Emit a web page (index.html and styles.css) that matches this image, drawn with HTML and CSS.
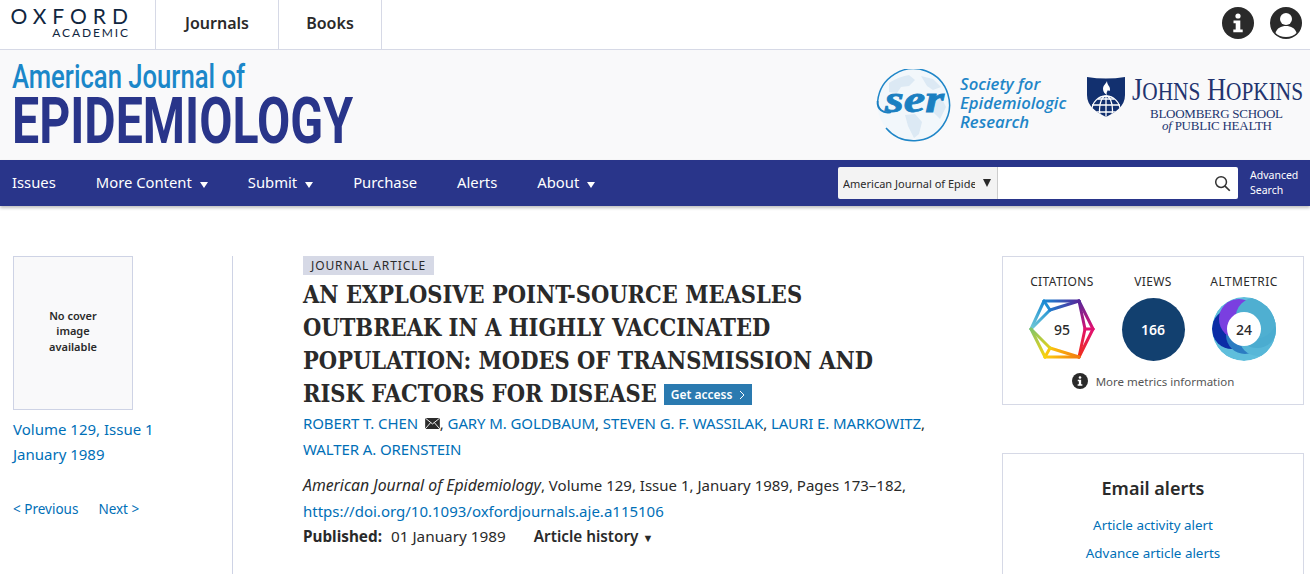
FILE: index.html
```html
<!DOCTYPE html>
<html lang="en">
<head>
    <meta charset="UTF-8">
    <title>An Explosive Point-Source Measles Outbreak | American Journal of Epidemiology</title>
    <link rel="stylesheet" href="styles.css">
</head>
<body>
    <div class="top-bar">
        <a class="oxford-logo">
            <span class="oxford-word">OXFORD</span>
            <span class="oxford-sub">ACADEMIC</span>
        </a>
        <a class="top-link top-link-first">Journals</a>
        <a class="top-link top-link-second">Books</a>
        <div class="top-icons">
            <svg class="top-icon" viewBox="0 0 32 32">
                <circle cx="16" cy="16" r="16" fill="#2a2a2a"/>
                <circle cx="16" cy="9" r="2.600" fill="#fff"/>
                <path d="M11.500 13.500h6.800v9h2.400v2.800h-9.400v-2.800h2.400v-6.200h-2.200z" fill="#fff"/>
            </svg>
            <svg class="top-icon" viewBox="0 0 32 32">
                <circle cx="16" cy="16" r="16" fill="#2a2a2a"/>
                <circle cx="16" cy="12" r="6" fill="#fff"/>
                <path d="M5.500 26c1.500-5 5.500-7 10.500-7s9 2 10.500 7c-2.500 2.500-6 4-10.500 4s-8-1.500-10.500-4z" fill="#fff"/>
            </svg>
        </div>
    </div>

    <div class="journal-header">
        <svg class="journal-title" viewBox="0 0 345 96" role="img">
            <text class="journal-line1" x="0" y="38" textLength="233" lengthAdjust="spacingAndGlyphs">American Journal of</text>
            <text class="journal-line2" x="0" y="93" textLength="341" lengthAdjust="spacingAndGlyphs">EPIDEMIOLOGY</text>
        </svg>
        <div class="partner-logos">
            <svg class="ser-logo" viewBox="0 0 200 76">
                <circle cx="38.500" cy="35.500" r="36" fill="#f2f7fb"/>
                <path d="M14 14c8-5 14-7 20-8l6 5-6 6-8 1-4 6-8-1zM46 7l12 3 8 8-8 3-6-4zM30 46l10-1 7 8-3 12-5 4-6-12zM54 30l12-2 5 10-6 12-8-8z" fill="#dce9f4"/>
                <path d="M11 59A36 36 0 1 0 2.700 32" fill="none" stroke="#1f86c8" stroke-width="1.500"/>
                <path d="M2.700 32C2 40 8 45 16 43" fill="none" stroke="#1a7fc1" stroke-width="2"/>
                <text class="ser-mark" x="10" y="43" textLength="59" lengthAdjust="spacingAndGlyphs">ser</text>
                <text class="ser-text" x="85" y="21">Society for</text>
                <text class="ser-text" x="85" y="40">Epidemiologic</text>
                <text class="ser-text" x="85" y="59">Research</text>
            </svg>
            <svg class="jhu-logo" viewBox="0 0 216 62">
                <defs>
                    <clipPath id="jhu-shield">
                        <path d="M0 2Q19 5 38 2V20C38 31 29 37 19 42 9 37 0 31 0 20z"/>
                    </clipPath>
                </defs>
                <path d="M0 2Q19 5 38 2V20C38 31 29 37 19 42 9 37 0 31 0 20z" fill="#12306f"/>
                <path d="M20 6c-1 3-4 4-4 8 0 3 2 5 4 6-1-2 0-3 1-5 1 2 2 1 2-1 0-3-3-4-3-8z" fill="#fff"/>
                <g clip-path="url(#jhu-shield)" fill="none" stroke="#fff" stroke-width="1.300">
                    <circle cx="19" cy="35" r="14"/>
                    <ellipse cx="19" cy="35" rx="6.500" ry="14"/>
                    <path d="M19 21v21M5 30h28M7 37h24M11 24h16"/>
                </g>
                <text class="jhu-name" x="45" y="25" textLength="171" lengthAdjust="spacingAndGlyphs">J<tspan class="jhu-small">OHNS</tspan> H<tspan class="jhu-small">OPKINS</tspan></text>
                <text class="jhu-sub" x="63" y="43" textLength="133" lengthAdjust="spacing">BLOOMBERG SCHOOL</text>
                <text class="jhu-sub" x="75" y="55" textLength="110" lengthAdjust="spacing"><tspan font-style="italic">of</tspan> PUBLIC HEALTH</text>
            </svg>
        </div>
    </div>

    <div class="site-nav">
        <a class="nav-item">Issues</a>
        <a class="nav-item has-menu">More Content</a>
        <a class="nav-item has-menu">Submit</a>
        <a class="nav-item">Purchase</a>
        <a class="nav-item">Alerts</a>
        <a class="nav-item has-menu">About</a>
        <div class="nav-search">
            <div class="search-scope">
                <span class="search-scope-text">American Journal of Epidemiology</span>
                <span class="search-scope-arrow"></span>
            </div>
            <div class="search-box">
                <svg class="search-icon" viewBox="0 0 18 18">
                    <circle cx="7.500" cy="7.500" r="5.700" fill="none" stroke="#333" stroke-width="1.600"/>
                    <path d="M11.700 11.700l5 5" stroke="#333" stroke-width="1.800"/>
                </svg>
            </div>
            <a class="advanced-search">Advanced<br>Search</a>
        </div>
    </div>

    <div class="page-body">
        <div class="issue-col">
            <div class="cover">No cover<br>image<br>available</div>
            <a class="issue-link">Volume 129, Issue 1</a>
            <a class="issue-link">January 1989</a>
            <div class="issue-pager">
                <a>&lt; Previous</a>
                <a>Next &gt;</a>
            </div>
        </div>

        <div class="article-col">
            <span class="article-type">JOURNAL ARTICLE</span>
            <h1 class="article-title">AN EXPLOSIVE POINT-SOURCE MEASLES<br>OUTBREAK IN A HIGHLY VACCINATED<br>POPULATION: MODES OF TRANSMISSION AND<br>RISK FACTORS FOR DISEASE<a class="get-access">Get access<svg class="access-chevron" viewBox="0 0 6 10"><path d="M1 1l4 4-4 4" fill="none" stroke="#fff" stroke-width="1"/></svg></a></h1>
            <div class="authors">
                <a>ROBERT T. CHEN</a>
                <svg class="mail-icon" viewBox="0 0 16 12">
                    <path d="M0 0h16v12H0z" fill="#2a2a2a"/>
                    <path d="M0 0l8 6.500L16 0M0 12l6-7M16 12l-6-7" fill="none" stroke="#fff" stroke-width="1"/>
                </svg>, <a>GARY M. GOLDBAUM</a>, <a>STEVEN G. F. WASSILAK</a>, <a>LAURI E. MARKOWITZ</a>,<br>
                <a>WALTER A. ORENSTEIN</a>
            </div>
            <div class="citation">
                <em>American Journal of Epidemiology</em>, Volume 129, Issue 1, January 1989, Pages 173–182,<br>
                <a>https://doi.org/10.1093/oxfordjournals.aje.a115106</a>
            </div>
            <div class="pub-meta">
                <b>Published:</b><span class="pub-date">01 January 1989</span>
                <b class="history">Article history <i class="history-arrow">▼</i></b>
            </div>
        </div>

        <div class="side-col">
            <div class="metrics-card">
                <div class="metrics-row">
                    <div class="metric">
                        <div class="metric-label">CITATIONS</div>
                        <div class="metric-badge">
                            <svg viewBox="0 0 66 60" fill="none" stroke-width="3" stroke-linecap="round" stroke-linejoin="round">
                                <defs>
                                    <linearGradient id="hex-a" gradientUnits="userSpaceOnUse" x1="1" y1="30" x2="15" y2="2"><stop offset="0" stop-color="#74cbd6"/><stop offset="1" stop-color="#1789d4"/></linearGradient>
                                    <linearGradient id="hex-b" gradientUnits="userSpaceOnUse" x1="15" y1="2" x2="50" y2="2"><stop offset="0" stop-color="#1789d4"/><stop offset="1" stop-color="#55289a"/></linearGradient>
                                    <linearGradient id="hex-c" gradientUnits="userSpaceOnUse" x1="50" y1="2" x2="62" y2="30"><stop offset="0" stop-color="#55289a"/><stop offset="1" stop-color="#e01070"/></linearGradient>
                                    <linearGradient id="hex-d" gradientUnits="userSpaceOnUse" x1="62" y1="30" x2="50" y2="58"><stop offset="0" stop-color="#e01070"/><stop offset="1" stop-color="#f0301a"/></linearGradient>
                                    <linearGradient id="hex-e" gradientUnits="userSpaceOnUse" x1="50" y1="58" x2="16" y2="58"><stop offset="0" stop-color="#f27a10"/><stop offset="1" stop-color="#fdd00c"/></linearGradient>
                                    <linearGradient id="hex-f" gradientUnits="userSpaceOnUse" x1="16" y1="58" x2="1" y2="30"><stop offset="0" stop-color="#f8d40c"/><stop offset="1" stop-color="#7fc46a"/></linearGradient>
                                </defs>
                                <path d="M2 30L15 2" stroke="url(#hex-a)"/>
                                <path d="M2 30L21 11" stroke="url(#hex-a)"/>
                                <path d="M15 2L21 11" stroke="#1e8fd5"/>
                                <path d="M15 2H50" stroke="url(#hex-b)"/>
                                <path d="M21 11L50 2" stroke="url(#hex-b)"/>
                                <path d="M50 2L64 30" stroke="url(#hex-c)"/>
                                <path d="M50 2L56 30" stroke="url(#hex-c)"/>
                                <path d="M56 30H64" stroke="#e01070"/>
                                <path d="M64 30L50 58" stroke="url(#hex-d)"/>
                                <path d="M56 30L50 58" stroke="url(#hex-d)"/>
                                <path d="M50 58H16" stroke="url(#hex-e)"/>
                                <path d="M50 58L21 49" stroke="url(#hex-e)"/>
                                <path d="M16 58L21 49" stroke="#fbc60c"/>
                                <path d="M16 58L2 30" stroke="url(#hex-f)"/>
                                <path d="M21 49L2 30" stroke="url(#hex-f)"/>
                            </svg>
                            <span class="badge-num">95</span>
                        </div>
                    </div>
                    <div class="metric">
                        <div class="metric-label">VIEWS</div>
                        <div class="metric-badge">
                            <div class="views-circle">166</div>
                        </div>
                    </div>
                    <div class="metric">
                        <div class="metric-label">ALTMETRIC</div>
                        <div class="metric-badge">
                            <svg viewBox="0 0 64 64">
                                <defs>
                                    <clipPath id="alt-clip"><circle cx="32" cy="32" r="32"/></clipPath>
                                </defs>
                                <g clip-path="url(#alt-clip)">
                                    <circle cx="32" cy="32" r="32" fill="#5fbedc"/>
                                    <circle cx="20" cy="32" r="20" fill="#0b2ca6"/>
                                    <circle cx="33" cy="38" r="19" fill="#2b7cc2"/>
                                    <circle cx="27" cy="22" r="20" fill="#7a3fe0"/>
                                    <circle cx="46" cy="40" r="19" fill="#57b7d8"/>
                                    <circle cx="45" cy="31" r="20" fill="#4bacd0"/>
                                    <circle cx="44" cy="21" r="20.500" fill="#4fafd1"/>
                                </g>
                                <circle cx="32" cy="32" r="17" fill="#fff"/>
                            </svg>
                            <span class="badge-num">24</span>
                        </div>
                    </div>
                </div>
                <div class="metrics-info">
                    <svg class="metrics-info-icon" viewBox="0 0 32 32">
                        <circle cx="16" cy="16" r="16" fill="#2a2a2a"/>
                        <circle cx="16" cy="9" r="2.600" fill="#fff"/>
                        <path d="M11.500 13.500h6.800v9h2.400v2.800h-9.400v-2.800h2.400v-6.200h-2.200z" fill="#fff"/>
                    </svg>
                    More metrics information
                </div>
            </div>
            <div class="alerts-card">
                <h3>Email alerts</h3>
                <a>Article activity alert</a>
                <a>Advance article alerts</a>
            </div>
        </div>
    </div>
</body>
</html>
```

FILE: styles.css
```css
html, body {
    height: 574px;
    overflow: hidden;
}
body {
    margin: 0;
    font-family: "Noto Sans", Arial, sans-serif;
    color: #2a2a2a;
    background: #fff;
}
a {
    color: #006fb7;
    text-decoration: none;
}

/* top bar */
.top-bar {
    display: flex;
    align-items: stretch;
    height: 49px;
    border-bottom: 1px solid #d6d9e6;
}
.oxford-logo {
    display: flex;
    flex-direction: column;
    align-items: flex-end;
    flex: none;
    width: 116px;
    padding: 6px 27px 0 12px;
    color: #10263f;
}
.oxford-word {
    font-family: "Lato", sans-serif;
    font-size: 21px;
    line-height: 20px;
    letter-spacing: 6px;
    margin-right: -6px;
}
.oxford-sub {
    font-family: "Lato", sans-serif;
    font-size: 12px;
    line-height: 14px;
    letter-spacing: 1.900px;
    margin-right: -2px;
}
.top-link {
    display: flex;
    align-items: center;
    justify-content: center;
    padding-bottom: 4px;
    font-size: 16px;
    font-weight: 600;
    color: #2a2a2a;
    border-right: 1px solid #d6d9e6;
}
.top-link-first {
    width: 122px;
    border-left: 1px solid #d6d9e6;
}
.top-link-second {
    width: 102px;
}
.top-icons {
    display: flex;
    align-items: center;
    gap: 16px;
    margin-left: auto;
    padding: 0 8px 3px 0;
}
.top-icon {
    width: 32px;
    height: 32px;
}

/* journal header */
.journal-header {
    display: flex;
    justify-content: space-between;
    height: 110px;
    padding: 0 7px 0 12px;
    background: #f9f9fa;
}
.journal-title {
    width: 345px;
    height: 96px;
    overflow: visible;
}
.journal-line1 {
    font-family: "Roboto", sans-serif;
    font-weight: 500;
    font-size: 33px;
    fill: #1b87c9;
}
.journal-line2 {
    font-family: "Roboto", sans-serif;
    font-weight: 700;
    font-size: 65px;
    fill: #29358a;
}
.partner-logos {
    display: flex;
    gap: 12px;
    padding-top: 19px;
}
.ser-logo {
    width: 200px;
    height: 76px;
}
.ser-mark {
    font-family: "Liberation Serif", serif;
    font-style: italic;
    font-weight: 700;
    font-size: 37px;
    fill: #1a7fc1;
    stroke: #1a7fc1;
    stroke-width: 0.800;
}
.ser-text {
    font-family: "Open Sans", sans-serif;
    font-style: italic;
    font-weight: 600;
    font-size: 16.700px;
    fill: #1f86c8;
}
.jhu-logo {
    width: 216px;
    height: 62px;
    margin-top: 6px;
    overflow: visible;
}
.jhu-name {
    font-family: "Liberation Serif", serif;
    font-size: 31px;
    fill: #22346f;
}
.jhu-small {
    font-size: 25px;
}
.jhu-sub {
    font-family: "Liberation Serif", serif;
    font-size: 13px;
    fill: #22346f;
}

/* nav */
.site-nav {
    display: flex;
    align-items: center;
    height: 46px;
    padding: 0 0 0 12px;
    background: #29358a;
    box-shadow: 0 2px 3px rgba(0, 0, 0, 0.25);
    gap: 40px;
}
.nav-item {
    padding-bottom: 2px;
    color: #fff;
    font-size: 14.800px;
}
.has-menu::after {
    content: "";
    display: inline-block;
    margin-left: 8px;
    border-left: 4px solid transparent;
    border-right: 4px solid transparent;
    border-top: 6px solid #fff;
}
.nav-search {
    display: flex;
    align-items: center;
    margin-left: auto;
}
.search-scope {
    display: flex;
    align-items: center;
    justify-content: space-between;
    width: 159px;
    height: 32px;
    padding: 0 6px 0 5px;
    box-sizing: border-box;
    background: #f3f3f3;
    border-radius: 2px 0 0 2px;
    font-size: 11px;
}
.search-scope-text {
    width: 132px;
    overflow: hidden;
    white-space: nowrap;
}
.search-scope-arrow {
    border-left: 4.500px solid transparent;
    border-right: 4.500px solid transparent;
    border-top: 8px solid #2a2a2a;
}
.search-box {
    display: flex;
    align-items: center;
    justify-content: flex-end;
    width: 241px;
    height: 32px;
    padding-right: 7px;
    box-sizing: border-box;
    background: #fff;
    border-left: 1px solid #ccc;
    border-radius: 0 2px 2px 0;
}
.search-icon {
    width: 17px;
    height: 17px;
}
.advanced-search {
    width: 72px;
    padding-left: 12px;
    box-sizing: border-box;
    color: #fff;
    font-size: 10.500px;
    line-height: 15px;
}

/* page columns */
.page-body {
    display: flex;
    padding: 50px 6px 0 13px;
}
.issue-col {
    flex: none;
    width: 219px;
    height: 320px;
    border-right: 1px solid #ced3e5;
}
.cover {
    display: flex;
    align-items: center;
    justify-content: center;
    width: 118px;
    height: 148px;
    padding-bottom: 4px;
    margin-bottom: 7px;
    border: 1px solid #ced3e5;
    background: #f9f9fa;
    text-align: center;
    font-size: 11px;
    font-weight: 600;
    line-height: 15.500px;
}
.issue-link {
    display: block;
    font-size: 15px;
    line-height: 25px;
}
.issue-pager {
    display: flex;
    gap: 20px;
    margin-top: 33px;
    font-size: 13.500px;
    line-height: 18px;
}

.article-col {
    flex: none;
    width: 630px;
    margin-left: 70px;
}
.article-type {
    display: block;
    width: fit-content;
    padding: 0 8px;
    background: #d6d9e6;
    font-size: 12px;
    line-height: 19px;
    letter-spacing: 0.900px;
}
.article-title {
    margin: 4px 0 0;
    font-family: "DejaVu Serif Condensed", "DejaVu Serif", serif;
    font-stretch: condensed;
    font-size: 23.400px;
    line-height: 33px;
    font-weight: 700;
    color: #2a2a2a;
    white-space: nowrap;
}
.get-access {
    display: inline-flex;
    align-items: center;
    justify-content: space-between;
    width: 88px;
    box-sizing: border-box;
    margin-left: 7px;
    padding: 0 7px;
    height: 21px;
    vertical-align: 3px;
    background: #2a7ab0;
    color: #fff;
    font-family: "Noto Sans", sans-serif;
    font-stretch: normal;
    font-size: 12px;
    font-weight: 600;
}
.access-chevron {
    width: 6px;
    height: 10px;
}
.authors {
    margin-top: -1px;
    font-size: 15px;
    line-height: 26px;
    letter-spacing: -0.100px;
}
.mail-icon {
    width: 15px;
    height: 11px;
    margin-left: 3px;
}
.citation {
    margin-top: 10px;
    font-size: 15px;
    line-height: 26px;
}
.citation em {
    font-size: 15.800px;
}
.pub-meta {
    font-size: 15.300px;
    line-height: 24px;
}
.pub-date {
    margin: 0 24px 0 9px;
}
.history {
    font-weight: 600;
}
.history-arrow {
    font-style: normal;
    font-size: 11px;
}

/* right column */
.side-col {
    flex: none;
    width: 302px;
    margin-left: auto;
}
.metrics-card {
    height: 130px;
    border: 1px solid #d6d9e6;
    padding-top: 17px;
}
.metrics-row {
    display: flex;
    justify-content: center;
    gap: 25px;
}
.metric {
    display: flex;
    flex-direction: column;
    align-items: center;
    width: 66px;
}
.metric-label {
    font-size: 12px;
    line-height: 16px;
    letter-spacing: 0.400px;
    white-space: nowrap;
}
.metric-badge {
    position: relative;
    display: flex;
    align-items: center;
    justify-content: center;
    width: 66px;
    height: 64px;
    margin-top: 7px;
}
.metric-badge svg {
    width: 66px;
    height: 64px;
}
.badge-num {
    position: absolute;
    font-size: 14px;
    font-weight: 500;
}
.views-circle {
    display: flex;
    align-items: center;
    justify-content: center;
    width: 63px;
    height: 63px;
    border-radius: 50%;
    background: #12406f;
    color: #fff;
    font-size: 14px;
    font-weight: 600;
}
.metrics-info {
    display: flex;
    align-items: center;
    justify-content: center;
    gap: 8px;
    margin-top: 12px;
    font-size: 11.500px;
    color: #555;
}
.metrics-info-icon {
    width: 16px;
    height: 16px;
}
.alerts-card {
    display: flex;
    flex-direction: column;
    align-items: center;
    margin-top: 48px;
    height: 150px;
    border: 1px solid #d6d9e6;
    font-size: 13.400px;
}
.alerts-card h3 {
    margin: 21px 0 10px;
    font-size: 18px;
    line-height: 26px;
    font-weight: 600;
}
.alerts-card a {
    line-height: 28px;
}
```
